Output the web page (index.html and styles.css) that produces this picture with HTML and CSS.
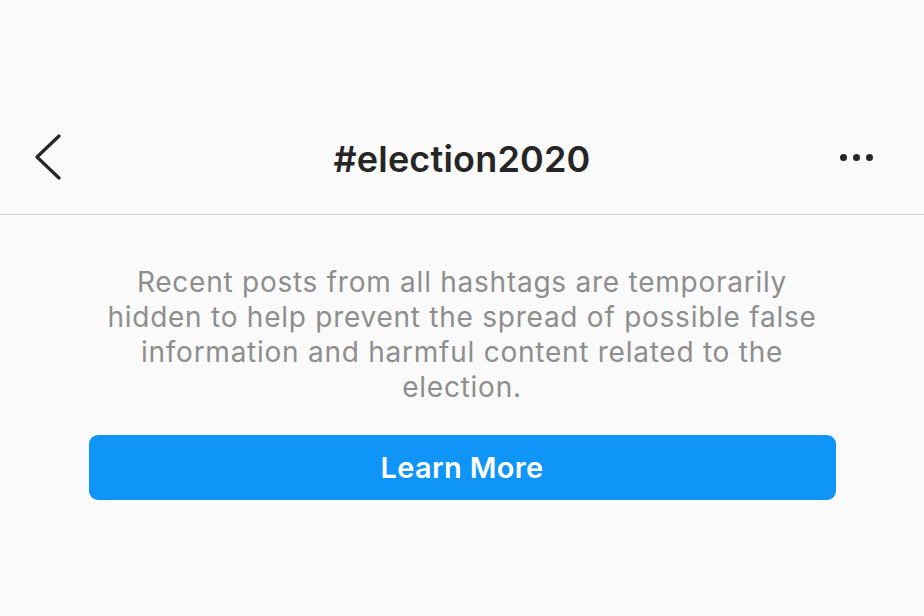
FILE: index.html
```html
<!DOCTYPE html>
<html lang="en">
<head>
<meta charset="utf-8">
<title>#election2020</title>
<link rel="stylesheet" href="styles.css">
</head>
<body>
<div class="screen">
  <header class="nav">
    <div class="nav-side nav-left">
      <svg class="back" width="28" height="46" viewBox="0 0 28 46" aria-label="Back">
        <polyline points="24,2 2,23 24,44" fill="none" stroke="#262626" stroke-width="3.2" stroke-linecap="round" stroke-linejoin="round"/>
      </svg>
    </div>
    <h1 class="title">#election2020</h1>
    <div class="nav-side nav-right">
      <span class="dot"></span><span class="dot"></span><span class="dot"></span>
    </div>
  </header>
  <main class="content">
    <p class="notice">Recent posts from all hashtags are temporarily<br>hidden to help prevent the spread of possible false<br>information and harmful content related to the<br>election.</p>
    <button class="learn">Learn More</button>
  </main>
</div>
</body>
</html>
```
FILE: styles.css
```css
html, body {
  margin: 0;
  padding: 0;
  background: #fafafa;
}
body {
  font-family: Inter, Roboto, "Liberation Sans", sans-serif;
  width: 924px;
  height: 616px;
  overflow: hidden;
}
.screen {
  padding-top: 100px;
}
.nav {
  display: flex;
  align-items: center;
  height: 114px;
  border-bottom: 1px solid #d2d2d2;
}
.nav-side {
  width: 110px;
  display: flex;
  align-items: center;
}
.nav-left {
  padding-left: 35px;
  box-sizing: border-box;
}
.back {
  display: block;
}
.nav-right {
  justify-content: flex-end;
  padding-right: 51px;
  box-sizing: border-box;
  gap: 6px;
}
.dot {
  width: 7px;
  height: 7px;
  border-radius: 50%;
  background: #262626;
}
.title {
  flex: 1;
  margin: 0;
  padding-top: 4px;
  text-align: center;
  font-size: 36px;
  font-weight: 600;
  color: #262626;
  letter-spacing: 0.2px;
}
.content {
  display: flex;
  flex-direction: column;
  align-items: center;
  padding-top: 50px;
}
.notice {
  margin: 0;
  width: 820px;
  text-align: center;
  font-size: 28px;
  line-height: 35px;
  color: #8e8e8e;
  letter-spacing: 0.75px;
}
.learn {
  margin-top: 30px;
  width: 747px;
  height: 65px;
  border: none;
  border-radius: 9px;
  background: #0e95f7;
  color: #ffffff;
  font-family: inherit;
  font-size: 29px;
  font-weight: 600;
  letter-spacing: 0.3px;
}
```
